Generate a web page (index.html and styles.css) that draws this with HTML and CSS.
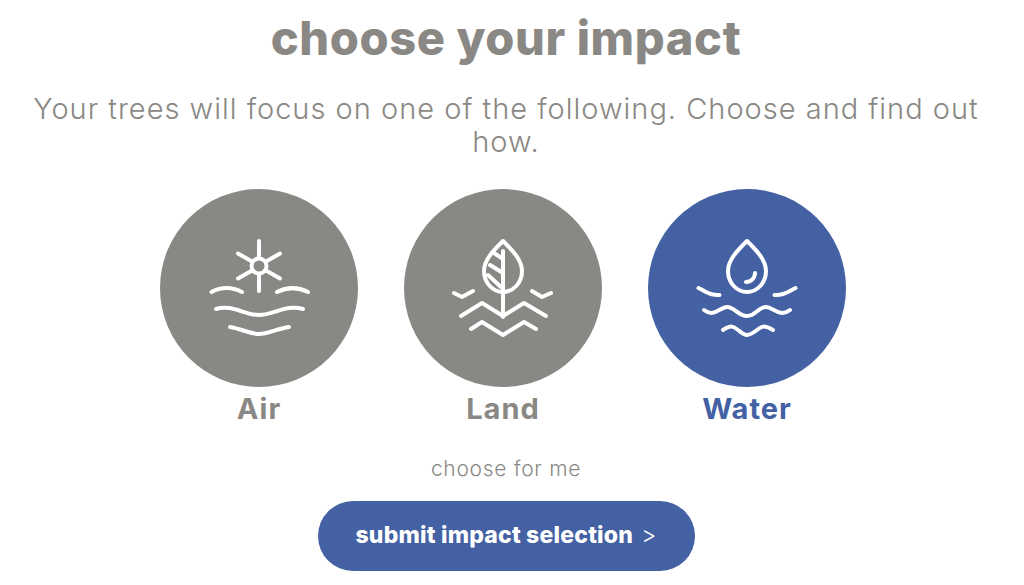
FILE: index.html
```html
<!DOCTYPE html>
<html lang="en">
<head>
    <meta charset="UTF-8">
    <title>Choose your impact</title>
    <link rel="stylesheet" href="styles.css">
</head>
<body>
    <main class="page">
        <h1 class="title">choose your impact</h1>
        <p class="intro">Your trees will focus on one of the following. Choose and find out how.</p>

        <div class="options">
            <div class="option">
                <div class="circle">
                    <svg class="icon" viewBox="0 0 198 198">
                        <circle cx="99" cy="77" r="7.500"/>
                        <path d="M99 52V69M99 85V102M78 64.500L92 72.500M106 81.500L120 89.500M78 89.500L92 81.500M106 72.500L120 64.500"/>
                        <path d="M51.500 103C61 98 72 98 82 103M117 103C127 98 138 98 148 103"/>
                        <path d="M56 120C72 115 84 126 99 126C114 126 126 115 143 120"/>
                        <path d="M70 138C82 140 90 145 99 145C108 145 116 140 129 138"/>
                    </svg>
                </div>
                <span class="label">Air</span>
            </div>
            <div class="option">
                <div class="circle">
                    <svg class="icon" viewBox="0 0 198 198">
                        <path d="M99 52C92 59 80 70 80 82C80 94 89 103 99 103C109 103 118 94 118 82C118 70 106 59 99 52Z"/>
                        <path d="M99 62V128M90 64L99 70M86 76L99 84M84 86L97 98"/>
                        <path d="M50 104L58 108L69 102M128 102L138 108L147 104"/>
                        <path d="M57 127L78 114L99 127L120 114L142 127"/>
                        <path d="M67 140L78 133L99 146L120 133L132 140"/>
                    </svg>
                </div>
                <span class="label">Land</span>
            </div>
            <div class="option option-active">
                <div class="circle">
                    <svg class="icon" viewBox="0 0 198 198">
                        <path d="M99 52C92 59 80 70 80 82C80 94 89 103 99 103C109 103 118 94 118 82C118 70 106 59 99 52Z"/>
                        <path d="M98 93C103 93 107 89 107 84"/>
                        <path d="M50.500 99C57 102 62 107 71.500 106M126.500 106C136 107 141 102 147.500 99"/>
                        <path d="M56 121C66 129 72 118 79 118C87 118 90 127 99 127C108 127 110 118 118 118C125 118 132 129 142 121"/>
                        <path d="M75 141C83 136 85 137 90 141C94 144 96 146 99 146C102 146 105 144 109 141C114 137 116 136 125 141"/>
                    </svg>
                </div>
                <span class="label">Water</span>
            </div>
        </div>

        <p class="pick">choose for me</p>
        <button class="submit" type="button">submit impact selection <span class="arrow">&gt;</span></button>
    </main>
</body>
</html>
```

FILE: styles.css
```css
body {
    margin: 0;
    background-color: #fff;
    font-family: Inter, "Liberation Sans", sans-serif;
    color: #8a8884;
}
.page {
    display: flex;
    flex-direction: column;
    align-items: center;
    padding: 8px 32px 0 20px;
    height: 577px;
    overflow: hidden;
}
.title {
    margin: 0;
    font-size: 47px;
    line-height: 60px;
    font-weight: 800;
    letter-spacing: 0.6px;
    white-space: nowrap;
}
.intro {
    margin: 24px 0 0;
    font-size: 29px;
    font-weight: 300;
    letter-spacing: 1px;
    line-height: 33px;
    text-align: center;
}
.options {
    display: flex;
    gap: 46px;
    margin: 31px 6px 0 0;
}
.option {
    display: flex;
    flex-direction: column;
    align-items: center;
}
.circle {
    width: 198px;
    height: 198px;
    border-radius: 50%;
    background-color: #8a8884;
}
.icon {
    display: block;
    width: 198px;
    height: 198px;
    fill: none;
    stroke: #fff;
    stroke-width: 4;
    stroke-linecap: round;
    stroke-linejoin: round;
}
.label {
    margin-top: 5px;
    font-size: 29px;
    line-height: 34px;
    font-weight: 700;
    letter-spacing: 1px;
}
.option-active .circle {
    background-color: #4361a3;
}
.option-active .label {
    color: #4361a3;
}
.pick {
    margin: 30px 0 0;
    font-size: 21px;
    font-weight: 300;
    letter-spacing: 0.7px;
    line-height: 26px;
}
.submit {
    margin-top: 19px;
    width: 377px;
    height: 70px;
    padding: 0 0 2px;
    border: 0;
    border-radius: 35px;
    background-color: #4361a3;
    color: #fff;
    font-family: inherit;
    font-size: 23px;
    font-weight: 800;
    letter-spacing: 0.2px;
}
.arrow {
    margin-left: 3px;
    font-weight: 300;
}
```
